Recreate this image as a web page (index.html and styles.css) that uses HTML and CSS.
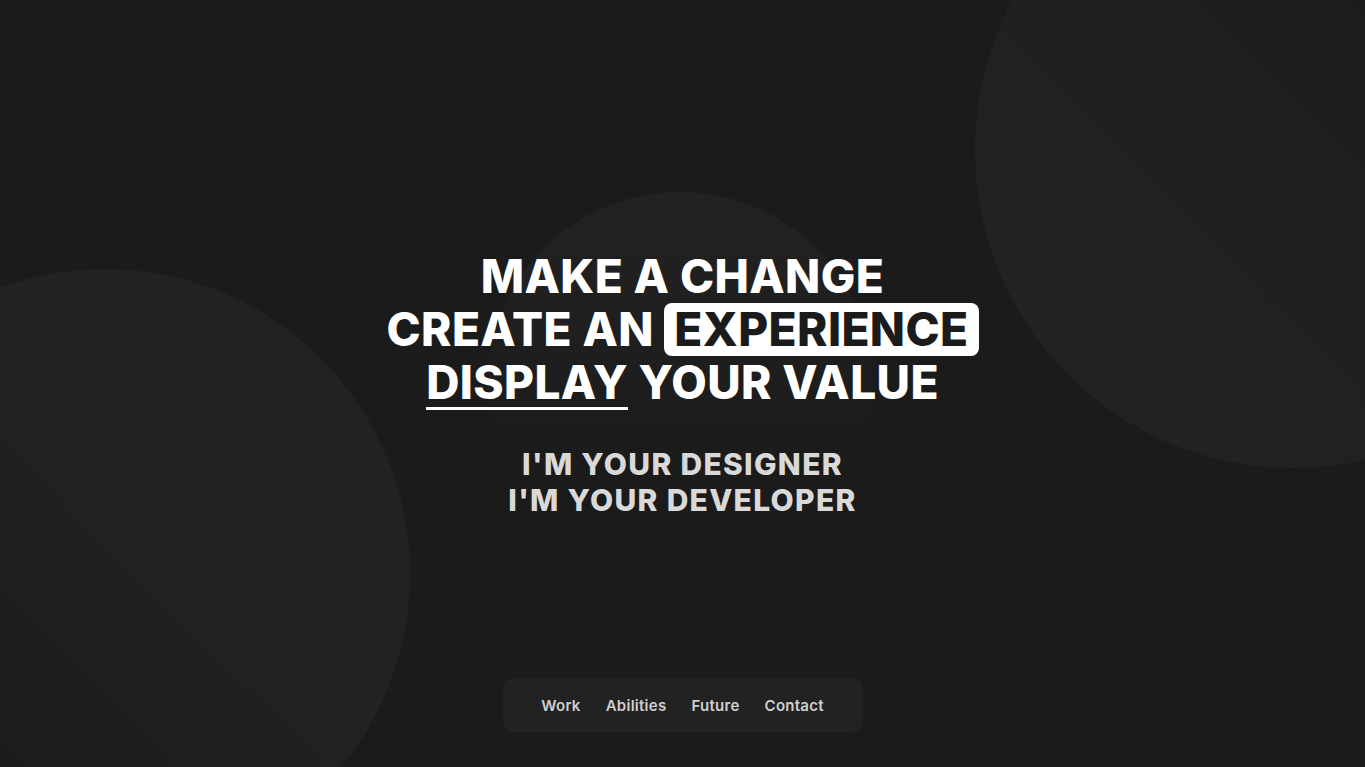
FILE: index.html
```html
<!DOCTYPE html>
<html lang="en">
<head>
<meta charset="utf-8">
<title>Make a change</title>
<link rel="stylesheet" href="styles.css">
</head>
<body>
<div class="page">
  <div class="blob blob-left"></div>
  <div class="blob blob-mid"></div>
  <div class="blob blob-right"></div>
  <main class="hero">
    <h1 class="headline">
      <span class="line">MAKE A CHANGE</span>
      <span class="line">CREATE AN <span class="boxed">EXPERIENCE</span></span>
      <span class="line"><span class="under">DISPLAY</span> YOUR VALUE</span>
    </h1>
    <p class="sub">
      <span class="line">I'M YOUR DESIGNER</span>
      <span class="line">I'M YOUR DEVELOPER</span>
    </p>
  </main>
  <nav class="nav">
    <a href="#">Work</a>
    <a href="#">Abilities</a>
    <a href="#">Future</a>
    <a href="#">Contact</a>
  </nav>
</div>
</body>
</html>
```
FILE: styles.css
```css
* { box-sizing: border-box; }
html, body { margin: 0; padding: 0; }
body {
  background: #1b1b1b;
  font-family: Inter, "Open Sans", "Liberation Sans", sans-serif;
  color: #fff;
  overflow: hidden;
}
.page {
  position: relative;
  width: 100%;
  height: 767px;
  overflow: hidden;
  display: flex;
  align-items: center;
  justify-content: center;
}
.blob {
  position: absolute;
  border-radius: 50%;
  z-index: 0;
}
.blob-left {
  width: 610px; height: 610px;
  left: -200px; top: 269px;
  background: linear-gradient(45deg, #1b1b1b 22%, #222 60%, #222 100%);
}
.blob-mid {
  width: 386px; height: 386px;
  left: 487px; top: 192px;
  background: linear-gradient(180deg, #222 0%, #1e1e1e 45%, #1b1b1b 70%);
}
.blob-right {
  width: 636px; height: 636px;
  left: 975px; top: -168px;
  background: linear-gradient(225deg, #1b1b1b 28%, #202020 55%, #232323 100%);
}
.hero {
  position: relative;
  z-index: 1;
  text-align: center;
}
.headline {
  margin: 0;
  font-size: 46px;
  line-height: 53px;
  font-weight: 800;
  letter-spacing: 0.4px;
}
.line { display: block; }
.boxed {
  display: inline-block;
  background: #fff;
  color: #1b1b1b;
  border-radius: 8px;
  padding: 0 10px;
  line-height: 53px;
}
.under {
  display: inline-block;
  border-bottom: 3px solid #fff;
  line-height: 49px;
}
.sub {
  margin: 36px 0 0;
  font-size: 30px;
  line-height: 36px;
  font-weight: 800;
  color: #d9d9d9;
  letter-spacing: 1.3px;
}
.nav {
  position: absolute;
  z-index: 2;
  left: 50%;
  bottom: 35px;
  transform: translateX(-50%);
  width: 360px;
  height: 54px;
  background: #222;
  border-radius: 10px;
  display: flex;
  align-items: center;
  justify-content: center;
  gap: 25px;
}
.nav a {
  color: #cfcfcf;
  text-decoration: none;
  font-size: 15px;
  font-weight: 600;
  letter-spacing: 0.27px;
}
```
